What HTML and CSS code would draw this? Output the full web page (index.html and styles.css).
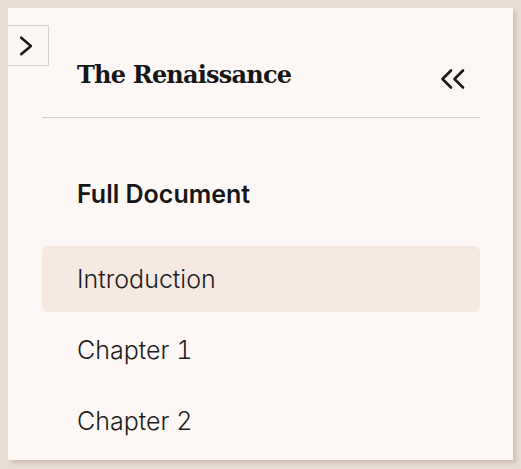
FILE: index.html
```html
<!DOCTYPE html>
<html lang="en">
<head>
<meta charset="utf-8">
<title>The Renaissance</title>
<link rel="stylesheet" href="styles.css">
</head>
<body>
<aside class="panel">
  <button class="toggle" aria-label="Expand">
    <svg width="41" height="41" viewBox="0 0 41 41"><path d="M13.5 12.5 L23.5 21 L13.5 29.5" fill="none" stroke="#1a1a1a" stroke-width="2.6" stroke-linecap="round" stroke-linejoin="round"/></svg>
  </button>
  <header class="head">
    <h1 class="title">The Renaissance</h1>
    <button class="collapse" aria-label="Collapse">
      <svg width="28" height="22" viewBox="0 0 28 22"><path d="M11 2.5 L2.5 11 L11 19.5 M23 2.5 L14.5 11 L23 19.5" fill="none" stroke="#1a1a1a" stroke-width="2.6" stroke-linecap="round" stroke-linejoin="round"/></svg>
    </button>
  </header>
  <div class="section">Full Document</div>
  <nav class="list">
    <a class="item active">Introduction</a>
    <a class="item">Chapter 1</a>
    <a class="item">Chapter 2</a>
  </nav>
</aside>
</body>
</html>
```
FILE: styles.css
```css
html, body { height: 100%; }
body {
  margin: 0;
  padding: 8px;
  box-sizing: border-box;
  background: #e9dcd3;
  font-family: "Inter", "Noto Sans", sans-serif;
  color: #1a1a1a;
  overflow: hidden;
}
.panel {
  position: relative;
  width: 505px;
  height: 452px;
  box-sizing: border-box;
  padding: 0 33px 0 34px;
  background: #fdf8f5;
  box-shadow: 3px 3px 4px rgba(90, 60, 40, 0.18);
}
.toggle {
  position: absolute;
  left: 0;
  top: 17px;
  width: 41px;
  height: 41px;
  padding: 0;
  margin: 0;
  border: 1px solid #d6d2ce;
  border-left: none;
  background: #fbf7f4;
  display: flex;
  align-items: center;
  justify-content: center;
}
.toggle svg { display: block; }
.head {
  height: 85px;
  padding-top: 24px;
  padding-left: 35px;
  padding-right: 12px;
  border-bottom: 1px solid #d3cfcb;
  display: flex;
  align-items: center;
  justify-content: space-between;
}
.title {
  margin: 0;
  font-family: "DejaVu Serif", "Liberation Serif", serif;
  font-weight: 700;
  font-size: 24px;
  letter-spacing: -0.8px;
  color: #161616;
}
.collapse {
  border: none;
  background: none;
  padding: 0;
  margin-top: 8px;
}
.collapse svg { display: block; }
.section {
  padding-left: 35px;
  margin-top: 62px;
  font-size: 25px;
  font-weight: 600;
  line-height: 28px;
  color: #171717;
}
.list {
  margin-top: 38px;
  display: flex;
  flex-direction: column;
  gap: 5px;
}
.item {
  height: 66px;
  padding-left: 35px;
  display: flex;
  align-items: center;
  border-radius: 6px;
  font-size: 25px;
  font-weight: 300;
  font-feature-settings: "tnum";
  color: #1c1c1c;
}
.item.active { background: #f5e9e2; }
```
